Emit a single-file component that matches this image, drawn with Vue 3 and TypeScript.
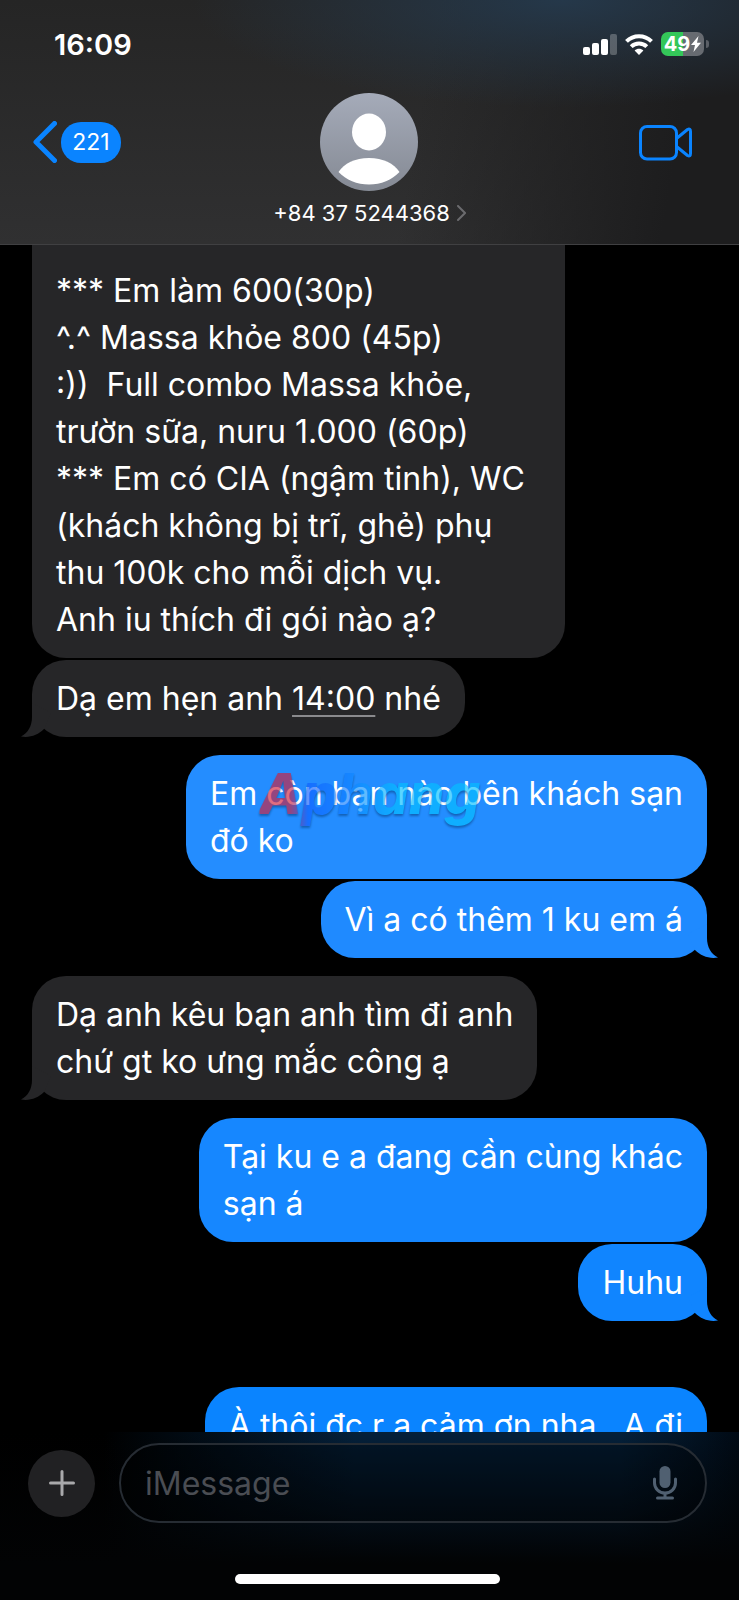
<script setup lang="ts">
import { ref } from 'vue'

interface Message {
  id: number
  from: 'them' | 'me'
  text: string
  time?: string
  after?: string
  tail?: boolean
  tone?: string
  spacing: 'first' | 'tight' | 'turn' | 'wide'
}

const contact = '+84 37 5244368'
const unread = 221
const draft = ref('')

const messages: Message[] = [
  {
    id: 1,
    from: 'them',
    spacing: 'first',
    text: [
      '*** Em làm 600(30p)',
      '^.^ Massa khỏe 800 (45p)',
      ':))  Full combo Massa khỏe,',
      'trườn sữa, nuru 1.000 (60p)',
      '*** Em có CIA (ngậm tinh), WC',
      '(khách không bị trĩ, ghẻ) phụ',
      'thu 100k cho mỗi dịch vụ.',
      'Anh iu thích đi gói nào ạ?',
    ].join('\n'),
  },
  { id: 2, from: 'them', spacing: 'tight', tail: true, text: 'Dạ em hẹn anh ', time: '14:00', after: ' nhé' },
  { id: 3, from: 'me', spacing: 'turn', tone: 'light', text: 'Em còn bạn nào bên khách sạn\nđó ko' },
  { id: 4, from: 'me', spacing: 'tight', tone: 'soft', tail: true, text: 'Vì a có thêm 1 ku em á' },
  { id: 5, from: 'them', spacing: 'turn', tail: true, text: 'Dạ anh kêu bạn anh tìm đi anh\nchứ gt ko ưng mắc công ạ' },
  { id: 6, from: 'me', spacing: 'turn', tone: 'mid', text: 'Tại ku e a đang cần cùng khác\nsạn á' },
  { id: 7, from: 'me', spacing: 'tight', tone: 'deep', tail: true, text: 'Huhu' },
  { id: 8, from: 'me', spacing: 'wide', tone: 'full', text: 'À thôi đc r a cảm ơn nha   A đi' },
]
</script>

<template>
  <main class="phone">
    <header class="header">
      <div class="status">
        <time class="clock">16:09</time>
        <div class="indicators">
          <svg class="signal" viewBox="0 0 34 21" aria-label="Signal">
            <rect x="0" y="13" width="7" height="8" rx="2" />
            <rect x="9" y="9" width="7" height="12" rx="2" />
            <rect x="18" y="5" width="7" height="16" rx="2" />
            <rect x="27" y="0" width="7" height="21" rx="2" opacity=".25" />
          </svg>
          <svg class="wifi" viewBox="0 0 28 21" aria-label="Wi-Fi">
            <g fill="none" stroke="#fff" stroke-width="4">
              <path d="M1.5 7.4C8.5.4 19.5.4 26.5 7.4" />
              <path d="M6.2 12.6C10.500 8.400 17.500 8.400 21.800 12.600" />
            </g>
            <path d="M9.600 16.600c2.500-2.400 6.300-2.400 8.800 0L14 20.900Z" />
          </svg>
          <div class="battery">
            <span class="cell">49<svg viewBox="0 0 10 16" aria-hidden="true"><path d="M7.500 0 0 9h4L2.500 16 10 6.800H6Z" /></svg></span>
            <span class="cap"></span>
          </div>
        </div>
      </div>

      <nav class="nav">
        <button class="back" type="button" aria-label="Back">
          <svg viewBox="0 0 24 42" aria-hidden="true"><path d="M21.500 2.500 3 21l18.500 18.500" /></svg>
          <span class="badge">{{ unread }}</span>
        </button>
        <button class="contact" type="button">
          <svg class="avatar" viewBox="0 0 98 98" aria-hidden="true">
            <defs>
              <linearGradient id="avatar-fill" x1="0" y1="0" x2="0" y2="1">
                <stop offset="0" stop-color="#a5abb9" />
                <stop offset="1" stop-color="#858a94" />
              </linearGradient>
            </defs>
            <circle cx="49" cy="49" r="49" fill="url(#avatar-fill)" />
            <ellipse cx="49" cy="39" rx="17" ry="18.500" fill="#fff" />
            <path d="M18.500 79C24 70.500 35 65 49 65s25 5.500 30.500 14C72 87 61 91.500 49 91.500S26 87 18.500 79Z" fill="#fff" />
          </svg>
          <span class="name">{{ contact }}
            <svg viewBox="0 0 9 16" aria-hidden="true"><path d="M1 1l7 7-7 7" /></svg>
          </span>
        </button>
        <button class="video" type="button" aria-label="FaceTime">
          <svg viewBox="0 0 54 36" aria-hidden="true">
            <rect x="1.500" y="1.500" width="36" height="32.500" rx="6.500" />
            <path d="M37.500 13.500 48.500 4.500Q51.500 3 51.500 6.500V28.500Q51.500 32 48.500 30.500L37.500 21.500" />
          </svg>
        </button>
      </nav>
    </header>

    <section class="thread">
      <div
        v-for="m in messages"
        :key="m.id"
        class="bubble"
        :class="[m.from, m.spacing, m.tone]"
      >
        <p>{{ m.text }}<a v-if="m.time" href="#">{{ m.time }}</a>{{ m.after }}</p>
        <svg v-if="m.tail" class="tail" viewBox="0 0 34 34" aria-hidden="true">
          <path d="M11 0V14C11 23 7 30 0 33.500C9 35 17 32 23 26L30 10Z" />
        </svg>
      </div>
    </section>

    <footer class="composer">
      <form class="row" @submit.prevent>
        <button class="plus" type="button" aria-label="Add">
          <svg viewBox="0 0 26 26" aria-hidden="true"><path d="M13 1.500v23M1.500 13h23" /></svg>
        </button>
        <div class="field">
          <input v-model="draft" type="text" placeholder="iMessage" aria-label="iMessage" />
          <button class="mic" type="button" aria-label="Dictate">
            <svg viewBox="0 0 24 34" aria-hidden="true">
              <rect x="6.500" y="0" width="11" height="22" rx="5.500" />
              <path d="M1.500 13v4a10.500 10 0 0 0 21 0v-4M12 27v5M4.500 32h15" />
            </svg>
          </button>
        </div>
      </form>
      <div class="home"></div>
    </footer>

    <div class="watermark">Aphang</div>
  </main>
</template>

<style>
body {
  background: #000;
}
</style>

<style scoped>
* {
  box-sizing: border-box;
}

.phone {
  position: relative;
  display: flex;
  flex-direction: column;
  height: 100vh;
  overflow: hidden;
  background: #000;
  color: #fff;
  font-family: Inter, "Liberation Sans", sans-serif;
}

button {
  padding: 0;
  border: 0;
  background: none;
  color: inherit;
  font: inherit;
}

svg {
  display: block;
  flex: none;
}

.header {
  flex: none;
  height: 245px;
  border-bottom: 1px solid #404042;
  background:
    radial-gradient(ellipse 50% 44% at 76% 0, #25384a, transparent),
    linear-gradient(100deg, transparent 56%, #1d1d1e 90%),
    linear-gradient(#252525, #303031);
}

.status {
  display: flex;
  justify-content: space-between;
  align-items: center;
  height: 88px;
  padding: 0 30px 0 54px;
}

.clock {
  font-size: 29px;
  font-weight: 600;
}

.indicators {
  display: flex;
  align-items: center;
  gap: 8px;
  fill: #fff;
}

.signal {
  width: 34px;
  height: 21px;
}

.wifi {
  width: 28px;
  height: 21px;
}

.battery {
  display: flex;
  align-items: center;
  gap: 2px;
}

.cell {
  display: flex;
  align-items: center;
  justify-content: center;
  gap: 1px;
  width: 43px;
  height: 24px;
  border-radius: 7px;
  background: linear-gradient(90deg, #34c759 50%, #676b71 50%);
  font-size: 20px;
  font-weight: 700;
}

.cell svg {
  width: 10px;
  height: 16px;
}

.cap {
  width: 3px;
  height: 8px;
  border-radius: 0 4px 4px 0;
  background: #5a5f66;
}

.nav {
  display: grid;
  grid-template-columns: 1fr auto 1fr;
  align-items: start;
  padding: 5px 46px 0 33px;
}

.back {
  display: flex;
  align-items: center;
  gap: 4px;
  justify-self: start;
  margin-top: 28px;
}

.back svg {
  width: 24px;
  height: 42px;
  fill: none;
  stroke: #0a84ff;
  stroke-width: 5;
  stroke-linecap: round;
  stroke-linejoin: round;
}

.badge {
  display: grid;
  place-items: center;
  width: 60px;
  height: 41px;
  border-radius: 20px;
  background: #0a84ff;
  font-size: 23px;
}

.contact {
  display: flex;
  flex-direction: column;
  align-items: center;
  gap: 8px;
  margin-left: 13px;
}

.avatar {
  width: 98px;
  height: 98px;
}

.name {
  display: flex;
  align-items: center;
  gap: 7px;
  font-size: 22px;
  line-height: 28px;
}

.name svg {
  width: 9px;
  height: 16px;
  fill: none;
  stroke: #6b6b6e;
  stroke-width: 2;
  stroke-linecap: round;
}

.video {
  justify-self: end;
  margin-top: 32px;
}

.video svg {
  width: 54px;
  height: 36px;
  fill: none;
  stroke: #0a84ff;
  stroke-width: 3;
  stroke-linejoin: round;
}

.thread {
  display: flex;
  flex: 1;
  flex-direction: column;
  min-height: 0;
  overflow: hidden;
  padding: 0 32px;
}

.bubble {
  position: relative;
  flex: none;
  align-self: flex-start;
  padding: 15px 24px;
  border-radius: 34px;
  background: #262628;
  color: #fff;
  font-size: 32px;
  line-height: 47px;
}

.bubble p {
  margin: 0;
  white-space: pre;
}

.bubble a {
  color: inherit;
  text-decoration: underline #8a8a8d 2px;
  text-underline-offset: 5px;
}

.first {
  width: 79%;
  padding-top: 22px;
  border-radius: 0 0 34px 34px;
}

.tight {
  margin-top: 2px;
}

.turn {
  margin-top: 18px;
}

.wide {
  margin-top: 66px;
}

.me {
  align-self: flex-end;
}

.light {
  background: #248dff;
}

.soft {
  background: #1f8aff;
}

.mid {
  background: #1687ff;
}

.deep {
  background: #1085ff;
}

.full {
  background: #0a84ff;
}

.tail {
  position: absolute;
  bottom: 0;
  left: -11px;
  width: 34px;
  height: 34px;
  fill: #262628;
}

.me .tail {
  right: -11px;
  left: auto;
  transform: scaleX(-1);
}

.soft .tail {
  fill: #1f8aff;
}

.deep .tail {
  fill: #1085ff;
}

.composer {
  display: flex;
  flex: none;
  flex-direction: column;
  justify-content: space-between;
  height: 168px;
  padding: 11px 32px 16px 28px;
  background:
    linear-gradient(transparent, #020304 78%),
    linear-gradient(90deg, #000 14%, #04203a 48%, #04203a 84%, #010a14);
}

.row {
  display: flex;
  align-items: center;
  gap: 24px;
}

.plus {
  display: grid;
  flex: none;
  place-items: center;
  width: 67px;
  height: 67px;
  border-radius: 50%;
  background: #212123;
}

.plus svg {
  width: 26px;
  height: 26px;
  stroke: #a9a9ab;
  stroke-width: 3;
  stroke-linecap: round;
}

.field {
  display: flex;
  flex: 1;
  align-items: center;
  min-width: 0;
  height: 80px;
  padding: 0 28px 0 24px;
  border: 2px solid #262c33;
  border-radius: 40px;
  background: rgba(0, 0, 0, 0.3);
}

.field input {
  flex: 1;
  min-width: 0;
  padding: 0;
  border: 0;
  outline: 0;
  background: none;
  color: #fff;
  font: inherit;
  font-size: 32px;
}

.field input::placeholder {
  color: #4a4d53;
  opacity: 1;
}

.mic svg {
  width: 24px;
  height: 34px;
  fill: #506071;
}

.mic path {
  fill: none;
  stroke: #506071;
  stroke-width: 3;
  stroke-linecap: round;
}

.home {
  align-self: center;
  width: 39%;
  height: 10px;
  border-radius: 5px;
  background: #fff;
}

.watermark {
  position: absolute;
  top: 50%;
  left: 50%;
  padding-bottom: 12px;
  transform: translate(-50%, -50%);
  background: linear-gradient(90deg, #d0203c 14%, #1060ff 22%, #1080ff 40%, #04c0ff 62%);
  background-clip: text;
  color: transparent;
  font-size: 56px;
  font-style: italic;
  font-weight: 800;
  line-height: 72px;
  opacity: 0.65;
  filter: drop-shadow(0 2px 1px #0a4a90);
  pointer-events: none;
}
</style>
